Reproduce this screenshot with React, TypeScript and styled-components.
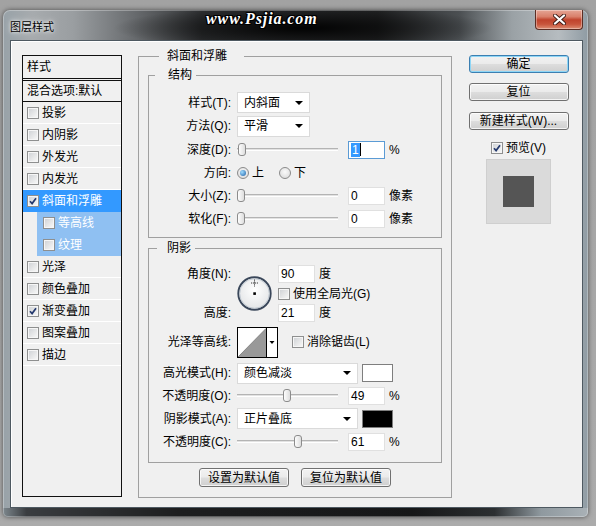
import React from "react";
import styled, { createGlobalStyle } from "styled-components";

const GlobalStyle = createGlobalStyle`
  html, body { margin: 0; padding: 0; }
  body {
    width: 596px; height: 526px; overflow: hidden;
    background: linear-gradient(#a2a2a2, #ababab);
    font-family: "Liberation Sans", "Noto Sans CJK SC", sans-serif;
    font-size: 12px; color: #000;
  }
`;

const Window = styled.div`
  position: relative;
  margin: 10px 0 0 3px;
  width: 585px;
  height: 507px;
  box-sizing: border-box;
  padding: 0 5px 9px 7px;
  border-radius: 7px 7px 5px 5px;
  display: flex;
  flex-direction: column;
  background:
    linear-gradient(90deg, #7d878d 0%, #3a3d40 4%, #1d1e1f 30%, #161718 70%, #2c2f31 84%, #8f999f 92%, #a9b1b6 100%) bottom / 100% 9px no-repeat,
    radial-gradient(ellipse 190px 22px at 300px 18px, rgba(0,0,0,.95), rgba(0,0,0,0)) top / 100% 40px no-repeat,
    linear-gradient(90deg, #98a2a8 0%, #a7abae 5%, #9a9ea1 12%, #6a6d70 22%, #2f3133 34%, #232425 64%, #4b4f52 78%, #9aa1a5 87%, #b6bcc0 95%, #8f9ba3 100%);
  box-shadow: 0 0 5px rgba(0,0,0,.55), inset 0 0 0 1px rgba(255,255,255,.3);
`;

const TitleBar = styled.div`
  height: 30px;
  display: flex;
  align-items: center;
  flex: none;
`;

const TitleText = styled.span`
  font-family: "Noto Sans CJK SC", sans-serif;
  font-size: 11px;
  line-height: 14px;
  color: #000;
  margin-top: 1px;
  text-shadow: 0 0 6px rgba(255,255,255,.9), 0 0 3px rgba(255,255,255,.9);
`;

const Watermark = styled.span`
  position: absolute;
  left: 203px;
  top: 0px;
  font-family: "Liberation Serif", serif;
  font-style: italic;
  font-weight: bold;
  font-size: 16px;
  letter-spacing: 0.9px;
  color: #fff;
  text-shadow: 1px 0 0 #000, -1px 0 0 #000, 0 1px 0 #000, 0 -1px 0 #000, 1px 1px 0 #000, -1px -1px 0 #000, 1px -1px 0 #000, -1px 1px 0 #000;
`;

const CloseButton = styled.div`
  margin-left: auto;
  align-self: flex-start;
  width: 48px;
  height: 20px;
  box-sizing: border-box;
  border: 1px solid #5c2e24;
  border-top: none;
  border-radius: 0 0 4px 4px;
  background: linear-gradient(#e5a595 0%, #d9806b 35%, #c0432c 52%, #c8553c 75%, #dd8e73 100%);
  box-shadow: inset 0 0 0 1px rgba(255,255,255,.35);
  display: flex;
  align-items: center;
  justify-content: center;
`;

const Client = styled.div`
  height: 468px;
  box-sizing: border-box;
  border: 1px solid #4e5961;
  background: #f0f0f0;
  box-shadow: inset 1px 1px 0 #fff;
  padding-left: 11px;
  display: grid;
  grid-template-columns: 100px 314px 100px;
  column-gap: 16px;
  align-items: start;
`;

/* ---------- left list ---------- */
const List = styled.div`
  margin-top: 14px;
  height: 442px;
  box-sizing: border-box;
  border: 1px solid #111;
  background: #f0f0f0;
  display: flex;
  flex-direction: column;
`;

const ListHeader = styled.div`
  height: 22px;
  padding-left: 4px;
  display: flex;
  align-items: center;
  border-bottom: 3px double #111;
  line-height: 14px;
`;

const BlendRow = styled.div`
  height: 20px;
  padding-left: 4px;
  display: flex;
  align-items: center;
  border-bottom: 1px solid #111;
  line-height: 14px;
`;

const ListRow = styled.div<{ $selected?: boolean; $sub?: boolean }>`
  height: 21px;
  display: flex;
  align-items: center;
  gap: 3px;
  line-height: 14px;
  margin-left: ${(p) => (p.$sub ? "14px" : "0")};
  padding-left: ${(p) => (p.$sub ? "6px" : "4px")};
  background: ${(p) => (p.$selected ? "#3399ff" : p.$sub ? "#8fc0f2" : "transparent")};
  color: ${(p) => (p.$selected || p.$sub ? "#fff" : "#000")};
  border-bottom: 1px solid ${(p) => (p.$selected ? "#3399ff" : p.$sub ? "#8fc0f2" : "#fff")};
`;

const BoxOuter = styled.span`
  width: 12px;
  height: 12px;
  box-sizing: border-box;
  flex: none;
  border: 1px solid #8e8f8f;
  background: linear-gradient(135deg, #cdd0d4 0%, #e6e7e8 55%, #fafafa 100%);
  box-shadow: inset 0 0 0 1px #f6f6f6;
  display: inline-flex;
  align-items: center;
  justify-content: center;
`;

function CheckBox({ checked }: { checked?: boolean }) {
  return (
    <BoxOuter>
      {checked && (
        <svg width="8" height="8" viewBox="0 0 8 8">
          <path d="M1 4.2 L3.1 6.6 L7 1.2" stroke="#24396e" strokeWidth="1.7" fill="none" />
        </svg>
      )}
    </BoxOuter>
  );
}

/* ---------- main group ---------- */
const MainGroup = styled.fieldset`
  margin: 7px 0 0 0;
  padding: 3px 9px 10px 9px;
  border: 1px solid #a0a0a0;
  min-width: 0;
  box-sizing: border-box;
  display: flex;
  flex-direction: column;
`;

const Legend = styled.legend<{ $ml: number; $pl: number; $pr: number }>`
  font-size: 12px;
  line-height: 16px;
  margin-left: ${(p) => p.$ml}px;
  padding: 0 ${(p) => p.$pr}px 0 ${(p) => p.$pl}px;
`;

const SubGroup = styled.fieldset<{ $mt: number; $pt: number; $pb: number }>`
  margin: ${(p) => p.$mt}px 0 0 0;
  padding: ${(p) => p.$pt}px 0 ${(p) => p.$pb}px 0;
  border: 1px solid #a0a0a0;
  min-width: 0;
  display: flex;
  flex-direction: column;
`;

const Row = styled.div<{ $h: number; $mt?: number }>`
  height: ${(p) => p.$h}px;
  margin-top: ${(p) => p.$mt ?? 0}px;
  display: flex;
  align-items: center;
`;

const Label = styled.span`
  width: 82px;
  margin-right: 6px;
  text-align: right;
  white-space: nowrap;
  line-height: 14px;
  flex: none;
`;

const Select = styled.div<{ $w: number }>`
  width: ${(p) => p.$w}px;
  height: 21px;
  box-sizing: border-box;
  border: 1px solid #dadada;
  background: #fff;
  padding: 0 6px 0 6px;
  display: flex;
  align-items: center;
  justify-content: space-between;
  line-height: 14px;
  flex: none;
  &::after {
    content: "";
    border-left: 4px solid transparent;
    border-right: 4px solid transparent;
    border-top: 4px solid #000;
  }
`;

const SliderTrack = styled.div`
  position: relative;
  width: 101px;
  height: 13px;
  flex: none;
  display: flex;
  align-items: center;
  &::before {
    content: "";
    width: 100%;
    height: 3px;
    box-sizing: border-box;
    border-top: 1px solid #b4b4b4;
    border-bottom: 1px solid #fff;
    background: #e2e2e2;
  }
`;

const Thumb = styled.span`
  position: absolute;
  top: 0;
  width: 8px;
  height: 13px;
  box-sizing: border-box;
  border: 1px solid #8c8c8c;
  border-radius: 3px;
  background: linear-gradient(90deg, #fdfdfd, #dedede);
`;

function Slider({ value }: { value: number }) {
  return (
    <SliderTrack>
      <Thumb style={{ left: `${(value / 100) * 93}px` }} />
    </SliderTrack>
  );
}

const Input = styled.div<{ $focus?: boolean; $ml?: number }>`
  width: 37px;
  height: 18px;
  box-sizing: border-box;
  margin-left: ${(p) => p.$ml ?? 10}px;
  border: 1px solid ${(p) => (p.$focus ? "#5b9bd5" : "#e0e0e0")};
  background: #fff;
  padding-left: 2px;
  display: flex;
  align-items: center;
  line-height: 14px;
  font-size: 12px;
  flex: none;
`;

const Selected = styled.span`
  background: #3399ff;
  color: #fff;
  padding: 0 1px;
  line-height: 14px;
`;

const Caret = styled.span`
  width: 1px;
  height: 13px;
  background: #000;
`;

const Unit = styled.span`
  margin-left: 4px;
  line-height: 14px;
`;

const RadioCircle = styled.span<{ $on?: boolean }>`
  width: 12px;
  height: 12px;
  box-sizing: border-box;
  border-radius: 50%;
  border: 1px solid #8a8a8a;
  background: radial-gradient(circle at 50% 40%, #fafafa, #d6d6d6);
  display: inline-flex;
  align-items: center;
  justify-content: center;
  flex: none;
  &::after {
    content: "";
    width: 6px;
    height: 6px;
    border-radius: 50%;
    background: ${(p) => (p.$on ? "radial-gradient(circle at 35% 35%, #9fdcff, #1d5fa6)" : "transparent")};
  }
`;

const RadioOption = styled.span<{ $w: number }>`
  width: ${(p) => p.$w}px;
  display: flex;
  align-items: center;
  gap: 3px;
  line-height: 14px;
`;

const AngleBlock = styled.div`
  display: grid;
  grid-template-columns: 82px 35px auto;
  grid-template-rows: 18px 21px 18px;
  column-gap: 6px;
  align-items: center;
`;

const DialCell = styled.div`
  grid-column: 2;
  grid-row: 1 / span 3;
  width: 35px;
  height: 35px;
`;

const CellRow = styled.div<{ $row: number; $col: number }>`
  grid-row: ${(p) => p.$row};
  grid-column: ${(p) => p.$col};
  display: flex;
  align-items: center;
`;

const CheckLabel = styled.span<{ $ml?: number }>`
  margin-left: ${(p) => p.$ml ?? 0}px;
  display: flex;
  align-items: center;
  gap: 3px;
  line-height: 14px;
`;

const Swatch = styled.span<{ $color: string }>`
  width: 31px;
  height: 18px;
  box-sizing: border-box;
  margin-left: 4px;
  border: 1px solid #7e7e7e;
  background: ${(p) => p.$color};
  flex: none;
`;

const ButtonBar = styled.div`
  margin-top: 5px;
  display: flex;
  justify-content: center;
  gap: 12px;
`;

const Button = styled.div<{ $w: number; $h?: number; $mt?: number; $default?: boolean }>`
  width: ${(p) => p.$w}px;
  height: ${(p) => p.$h ?? 18}px;
  margin-top: ${(p) => p.$mt ?? 0}px;
  box-sizing: border-box;
  border: 1px solid ${(p) => (p.$default ? "#3c7fb1" : "#707070")};
  border-radius: 3px;
  background: linear-gradient(#f2f2f2 0%, #ebebeb 48%, #dddddd 52%, #cfcfcf 100%);
  box-shadow: inset 0 0 0 1px ${(p) => (p.$default ? "#8ed6f6" : "rgba(255,255,255,.75)")};
  display: flex;
  align-items: center;
  justify-content: center;
  line-height: 14px;
  font-size: 12px;
  flex: none;
`;

/* ---------- right column ---------- */
const RightCol = styled.div`
  margin: 14px 0 0 1px;
  display: flex;
  flex-direction: column;
  align-items: center;
`;

const PreviewToggle = styled.div`
  margin-top: 12px;
  height: 12px;
  display: flex;
  align-items: center;
  gap: 3px;
  line-height: 14px;
`;

const PreviewBox = styled.div`
  margin-top: 5px;
  width: 65px;
  height: 65px;
  box-sizing: border-box;
  border: 1px solid #cfcfcf;
  background: #dadada;
  display: flex;
  align-items: center;
  justify-content: center;
  &::after {
    content: "";
    width: 31px;
    height: 31px;
    background: #555;
  }
`;

function Dial() {
  return (
    <svg width="35" height="35" viewBox="0 0 35 35">
      <defs>
        <radialGradient id="dg" cx="50%" cy="40%" r="60%">
          <stop offset="0%" stopColor="#ffffff" />
          <stop offset="100%" stopColor="#e2e4e6" />
        </radialGradient>
      </defs>
      <circle cx="17.5" cy="17.5" r="16.2" fill="url(#dg)" stroke="#3a475a" strokeWidth="1.9" />
      <circle cx="17.5" cy="17.5" r="14.8" fill="none" stroke="#b7c2cc" strokeWidth="0.8" />
      <rect x="16.3" y="16.3" width="2.6" height="2.6" fill="#000" />
      <path d="M17.5 3.5 V10.5 M14 7 H21" stroke="#222" strokeWidth="0.9" strokeDasharray="1.2 0.8" />
    </svg>
  );
}

function Contour() {
  return (
    <svg width="41" height="31" viewBox="0 0 41 31">
      <rect x="0.5" y="0.5" width="40" height="30" fill="#fff" stroke="#000" />
      <polygon points="1,30 29,1.5 29,30" fill="#999" />
      <line x1="1" y1="30" x2="29" y2="1.5" stroke="#777" strokeWidth="0.8" />
      <line x1="29.5" y1="1" x2="29.5" y2="30" stroke="#000" />
      <polygon points="32.5,14 37.5,14 35,17" fill="#000" />
    </svg>
  );
}

function CloseX() {
  return (
    <svg width="13" height="11" viewBox="0 0 13 11">
      <path d="M2 1.5 L11 9.5 M11 1.5 L2 9.5" stroke="#3b1a14" strokeWidth="4" strokeLinecap="round" />
      <path d="M2 1.5 L11 9.5 M11 1.5 L2 9.5" stroke="#fff" strokeWidth="2.3" strokeLinecap="round" />
    </svg>
  );
}

const listItems: { label: string; checked?: boolean; selected?: boolean; sub?: boolean }[] = [
  { label: "投影" },
  { label: "内阴影" },
  { label: "外发光" },
  { label: "内发光" },
  { label: "斜面和浮雕", checked: true, selected: true },
  { label: "等高线", sub: true },
  { label: "纹理", sub: true },
  { label: "光泽" },
  { label: "颜色叠加" },
  { label: "渐变叠加", checked: true },
  { label: "图案叠加" },
  { label: "描边" },
];

export default function App() {
  return (
    <>
      <GlobalStyle />
      <Window>
        <TitleBar>
          <TitleText>图层样式</TitleText>
          <CloseButton>
            <CloseX />
          </CloseButton>
        </TitleBar>
        <Watermark>www.Psjia.com</Watermark>
        <Client>
          <List>
            <ListHeader>样式</ListHeader>
            <BlendRow>混合选项:默认</BlendRow>
            {listItems.map((it) => (
              <ListRow key={it.label} $selected={it.selected} $sub={it.sub}>
                <CheckBox checked={it.checked} />
                <span>{it.label}</span>
              </ListRow>
            ))}
          </List>

          <MainGroup>
            <Legend $ml={11} $pl={8} $pr={17}>斜面和浮雕</Legend>

            <SubGroup $mt={0} $pt={8} $pb={7}>
              <Legend $ml={6} $pl={13} $pr={4}>结构</Legend>
              <Row $h={23}>
                <Label>样式(T):</Label>
                <Select $w={73}>内斜面</Select>
              </Row>
              <Row $h={24}>
                <Label>方法(Q):</Label>
                <Select $w={73}>平滑</Select>
              </Row>
              <Row $h={23}>
                <Label>深度(D):</Label>
                <Slider value={1} />
                <Input $focus>
                  <Selected>1</Selected>
                  <Caret />
                </Input>
                <Unit>%</Unit>
              </Row>
              <Row $h={23}>
                <Label>方向:</Label>
                <RadioOption $w={42}>
                  <RadioCircle $on />上
                </RadioOption>
                <RadioOption $w={40}>
                  <RadioCircle />下
                </RadioOption>
              </Row>
              <Row $h={23}>
                <Label>大小(Z):</Label>
                <Slider value={0} />
                <Input>0</Input>
                <Unit>像素</Unit>
              </Row>
              <Row $h={23}>
                <Label>软化(F):</Label>
                <Slider value={0} />
                <Input>0</Input>
                <Unit>像素</Unit>
              </Row>
            </SubGroup>

            <SubGroup $mt={2} $pt={9} $pb={9}>
              <Legend $ml={8} $pl={10} $pr={4}>阴影</Legend>
              <AngleBlock>
                <CellRow $row={1} $col={1}>
                  <Label>角度(N):</Label>
                </CellRow>
                <DialCell>
                  <Dial />
                </DialCell>
                <CellRow $row={1} $col={3}>
                  <Input $ml={0}>90</Input>
                  <Unit>度</Unit>
                </CellRow>
                <CellRow $row={2} $col={3}>
                  <CheckLabel>
                    <CheckBox />
                    使用全局光(G)
                  </CheckLabel>
                </CellRow>
                <CellRow $row={3} $col={1}>
                  <Label>高度:</Label>
                </CellRow>
                <CellRow $row={3} $col={3}>
                  <Input $ml={0}>21</Input>
                  <Unit>度</Unit>
                </CellRow>
              </AngleBlock>
              <Row $h={32} $mt={4}>
                <Label>光泽等高线:</Label>
                <Contour />
                <CheckLabel $ml={14}>
                  <CheckBox />
                  消除锯齿(L)
                </CheckLabel>
              </Row>
              <Row $h={22} $mt={4}>
                <Label>高光模式(H):</Label>
                <Select $w={121}>颜色减淡</Select>
                <Swatch $color="#fff" />
              </Row>
              <Row $h={23}>
                <Label>不透明度(O):</Label>
                <Slider value={49} />
                <Input>49</Input>
                <Unit>%</Unit>
              </Row>
              <Row $h={23}>
                <Label>阴影模式(A):</Label>
                <Select $w={121}>正片叠底</Select>
                <Swatch $color="#000" />
              </Row>
              <Row $h={23}>
                <Label>不透明度(C):</Label>
                <Slider value={61} />
                <Input>61</Input>
                <Unit>%</Unit>
              </Row>
            </SubGroup>

            <ButtonBar>
              <Button $w={90} $h={19}>设置为默认值</Button>
              <Button $w={90} $h={19}>复位为默认值</Button>
            </ButtonBar>
          </MainGroup>

          <RightCol>
            <Button $w={100} $default>确定</Button>
            <Button $w={100} $mt={10}>复位</Button>
            <Button $w={100} $mt={11}>新建样式(W)...</Button>
            <PreviewToggle>
              <CheckBox checked />
              预览(V)
            </PreviewToggle>
            <PreviewBox />
          </RightCol>
        </Client>
      </Window>
    </>
  );
}
